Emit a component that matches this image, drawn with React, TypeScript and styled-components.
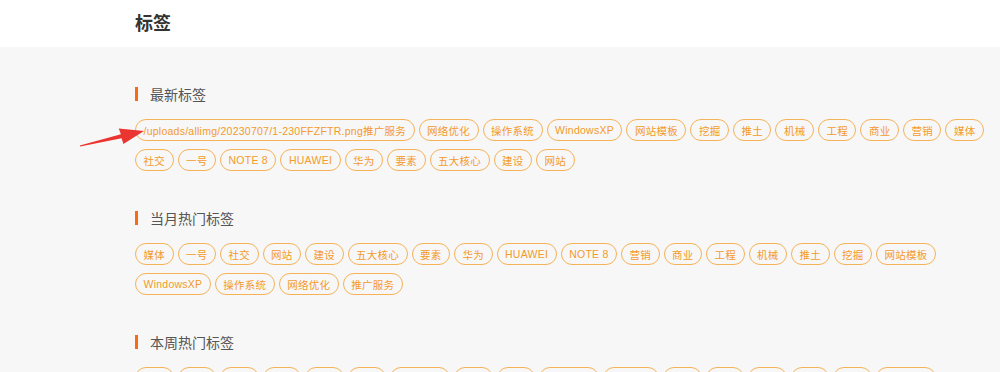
import React from "react";
import styled, { createGlobalStyle } from "styled-components";

const GlobalStyle = createGlobalStyle`
  html, body {
    margin: 0;
    padding: 0;
    background: #f7f7f7;
    font-family: "Liberation Sans", "Noto Sans CJK SC", sans-serif;
  }
`;

const Page = styled.div`
  position: relative;
  min-height: 372px;
  background: #f7f7f7;
`;

const Header = styled.header`
  height: 47px;
  background: #ffffff;
  display: flex;
  align-items: center;
  padding-left: 135px;
`;

const Title = styled.h1`
  margin: 0;
  font-size: 18px;
  font-weight: bold;
  color: #333333;
  line-height: 20px;
`;

const Main = styled.main`
  padding: 37px 0 30px 135px;
  width: 858px;
  display: flex;
  flex-direction: column;
  gap: 37px;
`;

const Section = styled.section`
  display: flex;
  flex-direction: column;
  gap: 15px;
`;

const Heading = styled.h2`
  margin: 0;
  height: 20px;
  display: flex;
  align-items: center;
  font-size: 14px;
  font-weight: normal;
  color: #555555;
  &::before {
    content: "";
    display: block;
    width: 3px;
    height: 14px;
    background: #fa6a12;
    margin-right: 12px;
  }
`;

const TagList = styled.div`
  display: flex;
  flex-wrap: wrap;
  column-gap: 4px;
  row-gap: 8px;
`;

const Tag = styled.a`
  display: inline-flex;
  align-items: center;
  height: 22px;
  box-sizing: border-box;
  padding: 0 7.5px;
  border: 1px solid #f6b257;
  border-radius: 11px;
  font-size: 10.5px;
  letter-spacing: 0.25px;
  color: #f39a2b;
  text-decoration: none;
  white-space: nowrap;
  cursor: pointer;
`;

const Arrow = styled.svg`
  position: absolute;
  left: 0;
  top: 0;
  width: 160px;
  height: 160px;
  pointer-events: none;
`;

const latest = [
  "/uploads/allimg/20230707/1-230FFZFTR.png推广服务",
  "网络优化",
  "操作系统",
  "WindowsXP",
  "网站模板",
  "挖掘",
  "推土",
  "机械",
  "工程",
  "商业",
  "营销",
  "媒体",
  "社交",
  "一号",
  "NOTE 8",
  "HUAWEI",
  "华为",
  "要素",
  "五大核心",
  "建设",
  "网站",
];

const month = [
  "媒体",
  "一号",
  "社交",
  "网站",
  "建设",
  "五大核心",
  "要素",
  "华为",
  "HUAWEI",
  "NOTE 8",
  "营销",
  "商业",
  "工程",
  "机械",
  "推土",
  "挖掘",
  "网站模板",
  "WindowsXP",
  "操作系统",
  "网络优化",
  "推广服务",
];

const week = [
  "社交",
  "一号",
  "媒体",
  "网站",
  "建设",
  "要素",
  "五大核心",
  "华为",
  "营销",
  "网站模板",
  "NOTE 8",
  "商业",
  "工程",
  "机械",
  "推土",
  "挖掘",
  "网络优化",
  "HUAWEI",
  "WindowsXP",
  "操作系统",
  "推广服务",
];

const sections = [
  { title: "最新标签", tags: latest },
  { title: "当月热门标签", tags: month },
  { title: "本周热门标签", tags: week },
];

export default function App() {
  return (
    <Page>
      <GlobalStyle />
      <Header>
        <Title>标签</Title>
      </Header>
      <Main>
        {sections.map((s) => (
          <Section key={s.title}>
            <Heading>{s.title}</Heading>
            <TagList>
              {s.tags.map((t, i) => (
                <Tag key={i}>{t}</Tag>
              ))}
            </TagList>
          </Section>
        ))}
      </Main>
      <Arrow viewBox="0 0 160 160">
        <polygon
          points="80.2,146.6 121.6,138.2 123.4,144 144,131 118.8,128.4 120.9,134.3 79.8,145.4"
          fill="#ea3530"
        />
      </Arrow>
    </Page>
  );
}
